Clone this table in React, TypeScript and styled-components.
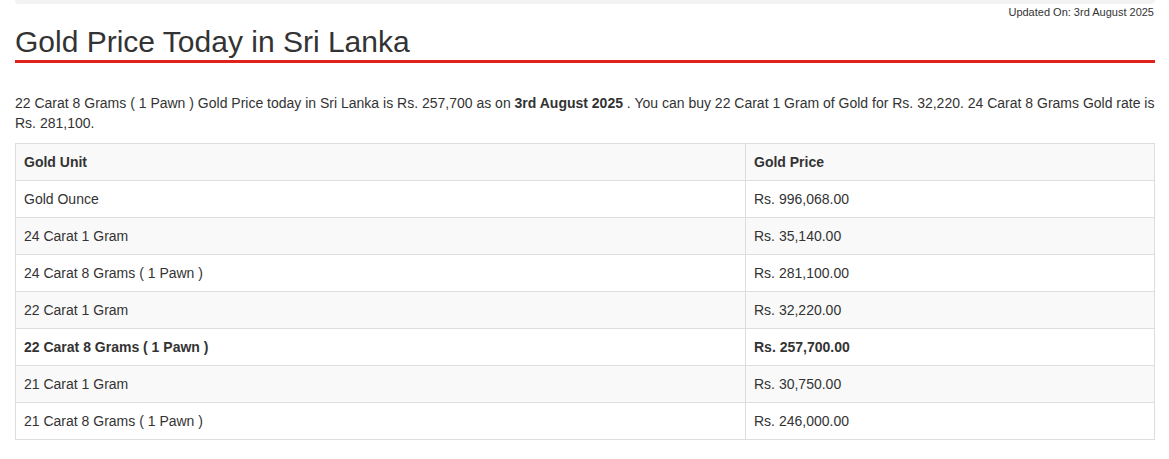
import React from 'react';
import styled, { createGlobalStyle } from 'styled-components';

const GlobalStyle = createGlobalStyle`
  body {
    margin: 0;
    background: #fff;
    font-family: "Liberation Sans", Arial, sans-serif;
    color: #333;
  }
`

const Page = styled.div`
  width: 1140px;
  margin: 0 auto 0 15px;
`

const TopBar = styled.div`
  height: 4px;
  background: #f3f3f3;
  border-radius: 0 0 4px 4px;
`

const Updated = styled.div`
  text-align: right;
  font-size: 11px;
  line-height: 14px;
  padding: 1px 1px 0 0;
  color: #333;
`

const Title = styled.h1`
  margin: 5px 0 0;
  font-size: 30px;
  font-weight: 400;
  line-height: 36px;
  color: #333;
  padding-bottom: 0;
  border-bottom: 3px solid #e0231a;
`

const Intro = styled.p`
  margin: 30px 0 10px;
  font-size: 14px;
  line-height: 20px;
`

const Table = styled.table`
  width: 100%;
  border-collapse: collapse;
  font-size: 14px;
  tr:nth-child(odd) { background: #f9f9f9; }
`

const Cell = styled.td<{ $bold?: boolean; $w?: string }>`
  border: 1px solid #ddd;
  padding: 8px;
  line-height: 20px;
  font-weight: ${p => p.$bold ? 700 : 400};
  width: ${p => p.$w || 'auto'};
`

const rows: [string, string, boolean?][] = [
  ['Gold Ounce', 'Rs. 996,068.00'],
  ['24 Carat 1 Gram', 'Rs. 35,140.00'],
  ['24 Carat 8 Grams ( 1 Pawn )', 'Rs. 281,100.00'],
  ['22 Carat 1 Gram', 'Rs. 32,220.00'],
  ['22 Carat 8 Grams ( 1 Pawn )', 'Rs. 257,700.00', true],
  ['21 Carat 1 Gram', 'Rs. 30,750.00'],
  ['21 Carat 8 Grams ( 1 Pawn )', 'Rs. 246,000.00'],
]

export default function App() {
  return <>
    <GlobalStyle />
    <Page>
      <TopBar />
      <Updated>Updated On: 3rd August 2025</Updated>
      <Title>Gold Price Today in Sri Lanka</Title>
      <Intro>
        22 Carat 8 Grams ( 1 Pawn ) Gold Price today in Sri Lanka is Rs. 257,700 as on <b>3rd August 2025</b> . You can buy 22 Carat 1 Gram of Gold for Rs. 32,220. 24 Carat 8 Grams Gold rate is Rs. 281,100.
      </Intro>
      <Table>
        <tbody>
          <tr>
            <Cell $bold $w='713px'>Gold Unit</Cell>
            <Cell $bold>Gold Price</Cell>
          </tr>
          {rows.map(([unit, price, bold], i) => (
            <tr key={i}>
              <Cell $bold={bold}>{unit}</Cell>
              <Cell $bold={bold}>{price}</Cell>
            </tr>
          ))}
        </tbody>
      </Table>
    </Page>
  </>
}
